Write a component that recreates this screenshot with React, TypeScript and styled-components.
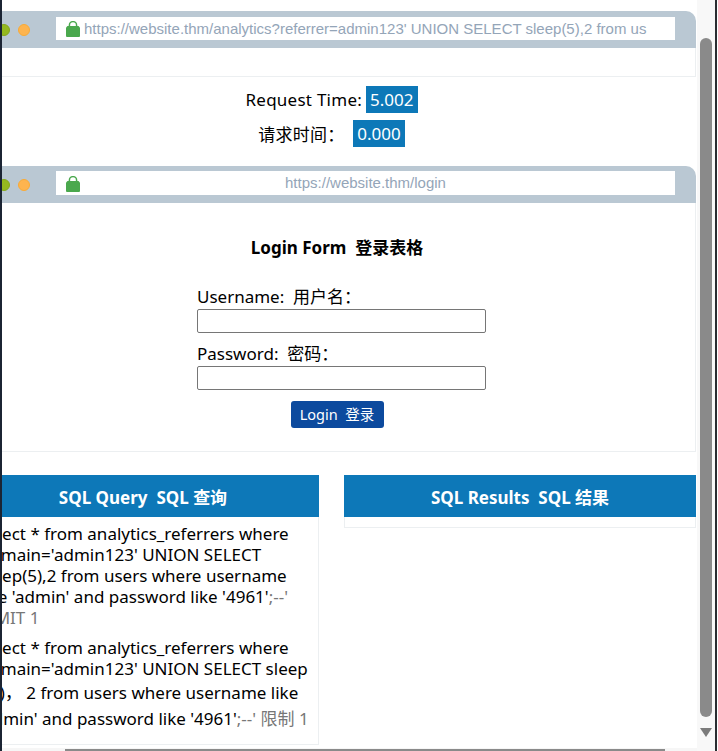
import React from "react";
import styled, { createGlobalStyle } from "styled-components";

const Global = createGlobalStyle`
  html, body { margin: 0; padding: 0; background: #fff; }
  body { font-family: "Noto Sans", "Noto Sans CJK SC", sans-serif; color: #000; }
  * { box-sizing: border-box; }
`;
const BODY_FONT = `"Noto Sans", "Noto Sans CJK SC", sans-serif`;

const Page = styled.div`
  width: 718px; height: 751px; display: flex; overflow: hidden; background: #fff;
`;
const LeftEdge = styled.div`width: 2px; background: #1b2433; flex: none;`;
const Viewport = styled.div`
  flex: none; width: 695px; display: flex; flex-direction: column; overflow: hidden;
`;
const Scroller = styled.div`flex: 1; overflow: hidden; padding-top: 11px;`;
const Content = styled.main`
  width: 729px; margin-left: -35px; display: flex; flex-direction: column;
`;
const Window = styled.section`display: flex; flex-direction: column;`;
const TitleBar = styled.div`
  height: 37px; background: #bac8d3; border-radius: 10px 10px 0 0;
  display: flex; align-items: center; padding: 1px 21px 0 11px; gap: 8px;
`;
const Dot = styled.span<{ $c: string; $b: string }>`
  width: 12px; height: 12px; border-radius: 50%; background: ${p => p.$c};
  border: 1px solid ${p => p.$b}; flex: none;
`;
const LockIcon = styled.svg`position: absolute; left: 10px; top: 4px;`;
const Address = styled.div<{ $center?: boolean }>`
  position: relative; flex: 1; background: #fff;
  height: ${p => (p.$center ? "24px" : "23px")};
  margin: ${p => (p.$center ? "-4px" : "-3px")} 0 0 18px;
  font: 15px/24px "Liberation Sans", Arial, sans-serif; color: #94a5b8;
  white-space: nowrap; overflow: hidden;
  padding-left: ${p => (p.$center ? "0" : "28px")};
  text-align: ${p => (p.$center ? "center" : "left")};
  ${LockIcon} { top: ${p => (p.$center ? "5px" : "4px")}; }
`;
const WindowBody = styled.div`
  border: 1px solid #eceff1; border-top: 0; min-height: 29px;
`;
const TimingBlock = styled.div`
  display: flex; flex-direction: column; align-items: center; gap: 7px;
  padding: 9px 0 19px; font-size: 17px; letter-spacing: 0.25px;
`;
const TimeRow = styled.div`height: 27px; display: flex; align-items: center; white-space: pre;`;
const TimeValue = styled.span`
  background: #0d78b8; color: #fff; height: 27px; line-height: 27px; padding: 0 4px;
  font-size: 17px; margin-left: 4px; letter-spacing: 0;
`;
const LoginBody = styled(WindowBody)`
  height: 249px; padding: 33px 0 0 11px; display: flex; justify-content: center;
`;
const Form = styled.form`width: 280px; display: flex; flex-direction: column;`;
const FormTitle = styled.h3`
  margin: 0 0 25px; font-size: 17px; line-height: 24px; font-weight: 700; text-align: center;
  white-space: pre;
`;
const Label = styled.label`font-size: 17px; line-height: 24px; white-space: pre; height: 24px; display: block;`;
const Field = styled.input`
  display: block; width: 289px; height: 24px; margin: 0 0 9px; padding: 0;
  border: 1px solid #767676; border-radius: 2px; background: #fff;
`;
const SubmitButton = styled.button`
  align-self: center; width: 93px; height: 27px; margin-top: 2px; border: 0; border-radius: 3px;
  background: #0c4a9e; color: #fff; padding: 0; white-space: pre;
  font: 14.5px/27px ${BODY_FONT};
`;
const Columns = styled.div`
  display: grid; grid-template-columns: 352px 352px; gap: 25px; margin-top: 23px; align-items: start;
`;
const Card = styled.article``;
const CardHeader = styled.h3`
  margin: 0; height: 42px; background: #0d78b8; color: #fff; text-align: center;
  font-size: 17px; line-height: 45px; font-weight: 700; white-space: pre;
`;
const CardBody = styled.div<{ $h: number }>`
  height: ${p => p.$h}px; border: 1px solid #eceff1; border-top: 0; padding: 6px 0 0 12px;
`;
const Query = styled.p<{ $gap?: number }>`
  margin: 0 0 ${p => p.$gap ?? 0}px; font-size: 17px; line-height: 21px; white-space: pre;
`;
const QueryTall = styled(Query)`line-height: 26px; margin-top: 1px;`;
const Nudged = styled.span`margin-left: 5px;`;
const Comment = styled.span`color: #777;`;

const HBar = styled.div`
  flex: none; height: 3px; background: #f6f6f6; display: flex; align-items: flex-end; padding-left: 63px;
`;
const HThumb = styled.div`width: 600px; height: 2px; background: #8a8a8a;`;
const Rail = styled.aside`
  flex: none; width: 18px; background: #f8f8f8; display: flex; flex-direction: column;
  align-items: center; padding: 38px 0 0 0;
`;
const Thumb = styled.div`
  width: 12px; height: 679px; border-radius: 6px; background: #8a8a8a;
`;
const Arrow = styled.div`
  margin-top: 11px; width: 0; height: 0; border-left: 6px solid transparent;
  border-right: 6px solid transparent; border-top: 9px solid #7b7b7b;
`;
const RightEdge = styled.div`flex: none; width: 2px; background: #2a2d31;`;

const Lock = () => (
  <LockIcon width="14" height="16" viewBox="0 0 14 16">
    <path d="M3.4 6V4.2a3.6 3.6 0 0 1 7.2 0V6" fill="none" stroke="#4aa84d" strokeWidth="1.5" />
    <path d="M1.5 5h11L14 6.5V15a1 1 0 0 1-1 1H1a1 1 0 0 1-1-1V6.5z" fill="#4aa84d" />
  </LockIcon>
);

const Bar = ({ url, center }: { url: string; center?: boolean }) => (
  <TitleBar>
    <Dot $c="#e2564d" $b="#d8473f" />
    <Dot $c="#95b91f" $b="#86a81c" />
    <Dot $c="#fdb44f" $b="#f9ab36" />
    <Address $center={center}>
      <Lock />
      {url}
    </Address>
  </TitleBar>
);

export default function App() {
  return (
    <Page>
      <Global />
      <LeftEdge />
      <Viewport>
        <Scroller>
          <Content>
            <Window>
              <Bar url="https://website.thm/analytics?referrer=admin123' UNION SELECT sleep(5),2 from us" />
              <WindowBody />
            </Window>
            <TimingBlock>
              <TimeRow>Request Time:<TimeValue>5.002</TimeValue></TimeRow>
              <TimeRow>请求时间： <TimeValue>0.000</TimeValue></TimeRow>
            </TimingBlock>
            <Window>
              <Bar url="https://website.thm/login" center />
              <LoginBody>
                <Form onSubmit={e => e.preventDefault()}>
                  <FormTitle>Login Form  登录表格</FormTitle>
                  <Label>Username:  用户名：</Label>
                  <Field type="text" />
                  <Label>Password:  密码：</Label>
                  <Field type="password" />
                  <SubmitButton type="submit">Login  登录</SubmitButton>
                </Form>
              </LoginBody>
            </Window>
            <Columns>
              <Card>
                <CardHeader>SQL Query  SQL 查询</CardHeader>
                <CardBody $h={228}>
                  <Query $gap={9}>
                    {"select * from analytics_referrers where\ndomain='admin123' UNION SELECT\nsleep(5),2 from users where username\nlike 'admin' and password like '4961'"}
                    <Comment>{";--'\nLIMIT 1"}</Comment>
                  </Query>
                  <Query>
                    {"select * from analytics_referrers where\ndomain='admin123' UNION SELECT sleep"}
                  </Query>
                  <QueryTall>
                    <Nudged>{"(5)， 2 from users where username like"}</Nudged>
                    {"\n'admin' and password like '4961'"}
                    <Comment>{";--' 限制 1"}</Comment>
                  </QueryTall>
                </CardBody>
              </Card>
              <Card>
                <CardHeader>SQL Results  SQL 结果</CardHeader>
                <CardBody $h={11} />
              </Card>
            </Columns>
          </Content>
        </Scroller>
        <HBar><HThumb /></HBar>
      </Viewport>
      <Rail>
        <Thumb />
        <Arrow />
      </Rail>
      <RightEdge />
    </Page>
  );
}
